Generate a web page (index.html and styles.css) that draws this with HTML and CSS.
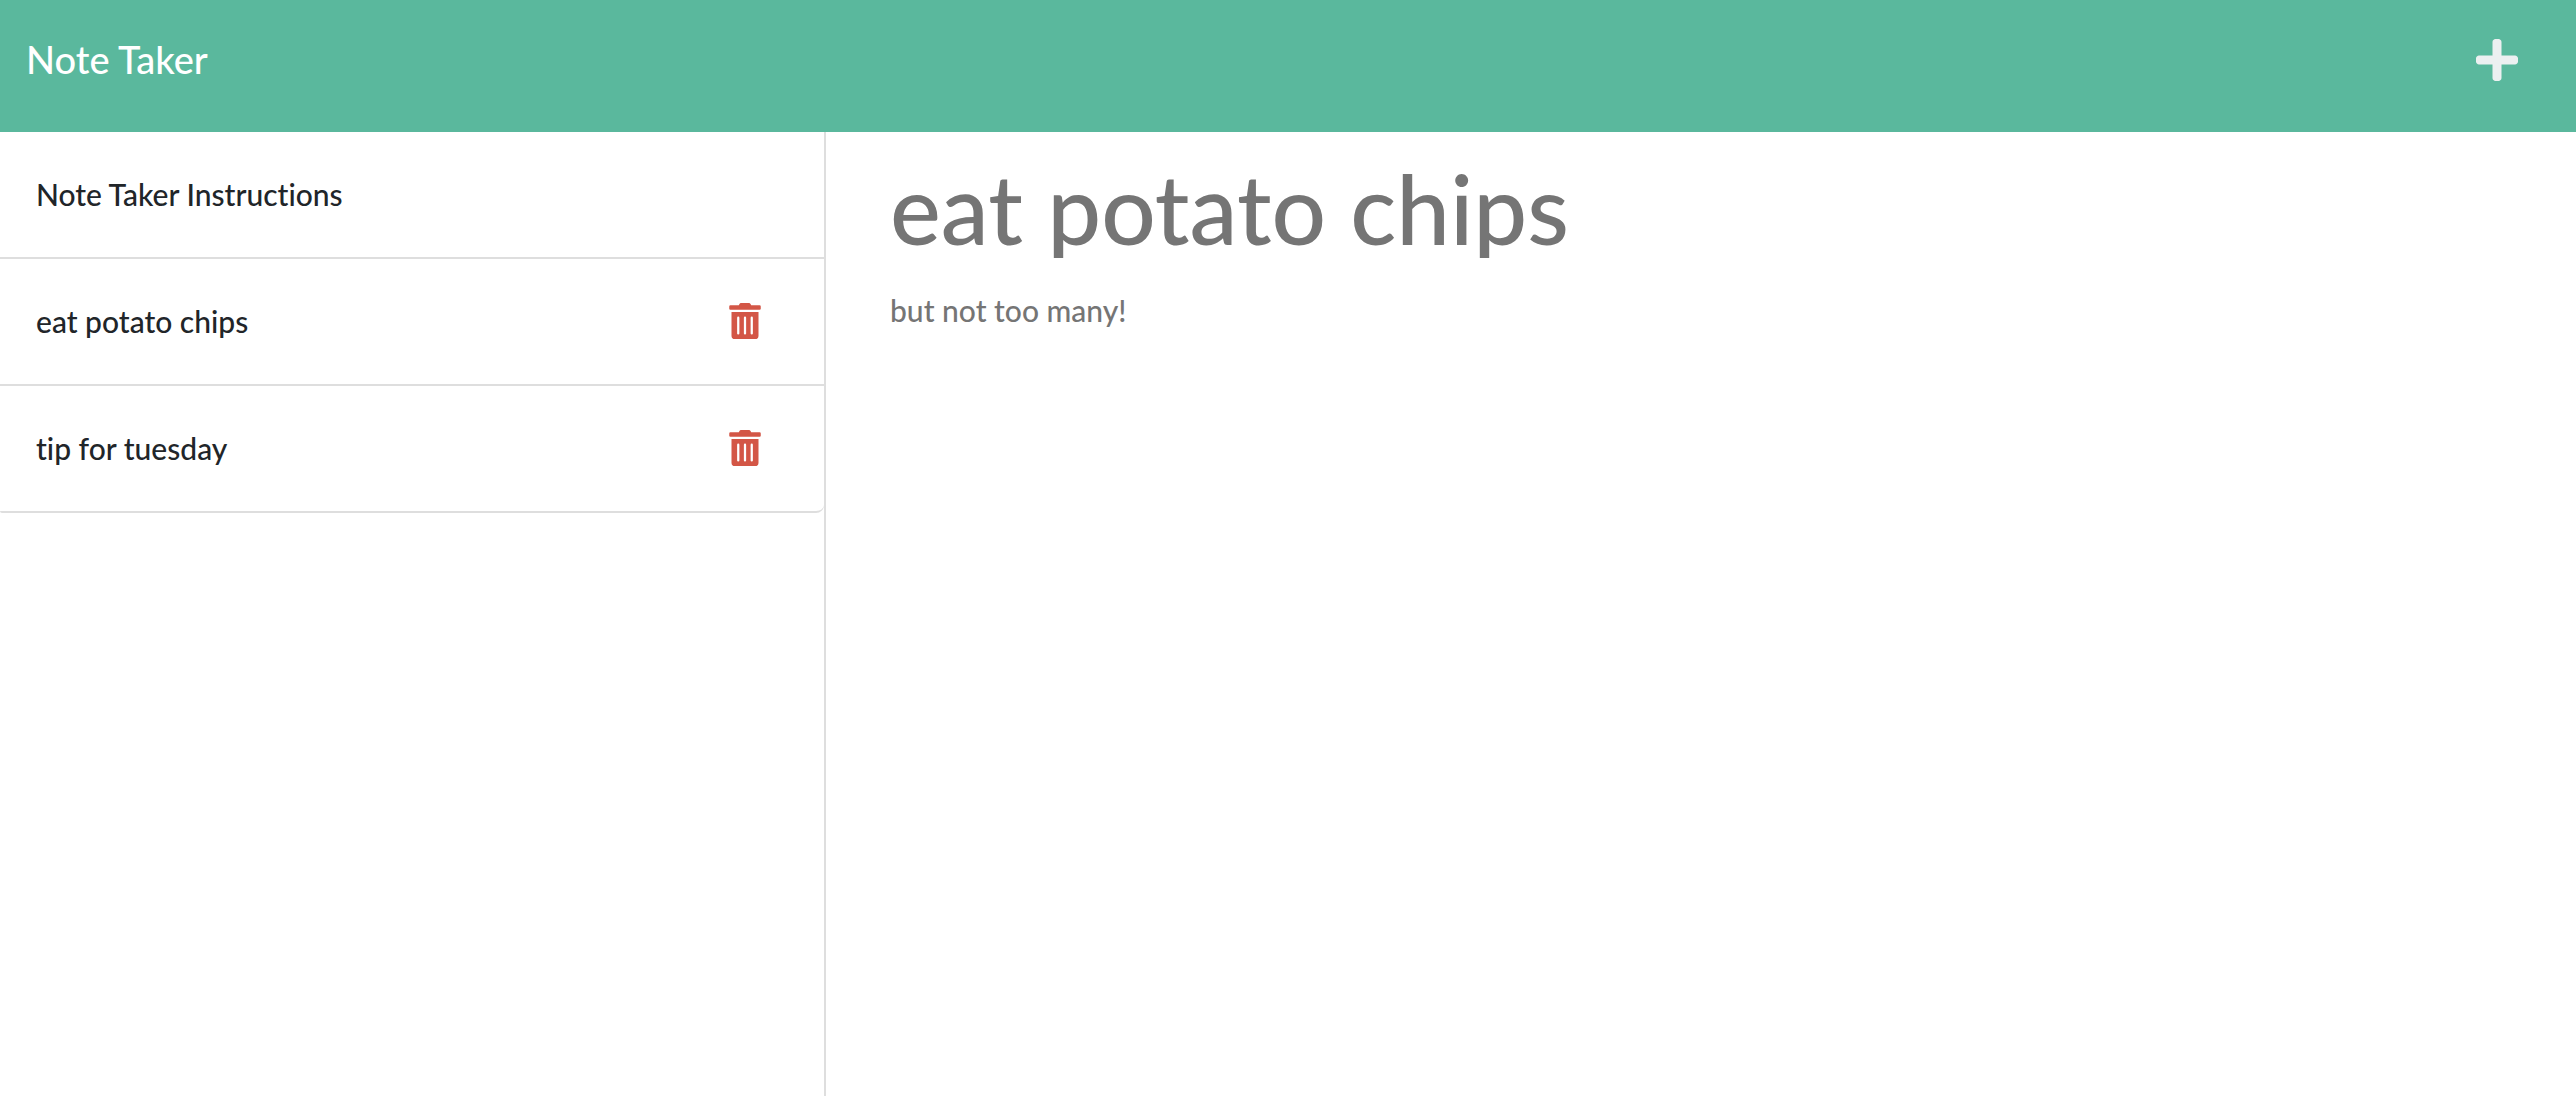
FILE: index.html
```html
<!DOCTYPE html>
<html lang="en">
<head>
<meta charset="utf-8">
<meta name="viewport" content="width=device-width, initial-scale=1">
<title>Note Taker</title>
<link rel="stylesheet" href="styles.css">
</head>
<body>
<svg class="sprite" aria-hidden="true">
  <symbol id="trash" viewBox="0 0 448 512"><path d="M32 464a48 48 0 0 0 48 48h288a48 48 0 0 0 48-48V128H32zm272-256a16 16 0 0 1 32 0v224a16 16 0 0 1-32 0zm-96 0a16 16 0 0 1 32 0v224a16 16 0 0 1-32 0zm-96 0a16 16 0 0 1 32 0v224a16 16 0 0 1-32 0zM432 32H312l-9.4-18.7A24 24 0 0 0 281.1 0H166.8a23.72 23.72 0 0 0-21.4 13.3L136 32H16A16 16 0 0 0 0 48v32a16 16 0 0 0 16 16h416a16 16 0 0 0 16-16V48a16 16 0 0 0-16-16z"/></symbol>
</svg>
<header class="navbar">
  <a class="brand" href="/">Note Taker</a>
  <button class="icon-button new-note" type="button" aria-label="New note">
    <svg class="plus-icon" viewBox="0 0 448 512" aria-hidden="true"><path d="M416 208H272V64c0-17.67-14.33-32-32-32h-32c-17.67 0-32 14.33-32 32v144H32c-17.67 0-32 14.33-32 32v32c0 17.67 14.33 32 32 32h144v144c0 17.67 14.33 32 32 32h32c17.67 0 32-14.33 32-32V304h144c17.67 0 32-14.33 32-32v-32c0-17.67-14.33-32-32-32z"/></svg>
  </button>
</header>
<div class="layout">
  <nav class="sidebar" aria-label="Notes">
    <ul class="note-list">
      <li class="note-item"><a class="note-link" href="#instructions">Note Taker Instructions</a></li>
      <li class="note-item">
        <a class="note-link" href="#chips">eat potato chips</a>
        <button class="icon-button delete-note" type="button" aria-label="Delete eat potato chips"><svg class="trash-icon" aria-hidden="true"><use href="#trash"/></svg></button>
      </li>
      <li class="note-item">
        <a class="note-link" href="#tuesday">tip for tuesday</a>
        <button class="icon-button delete-note" type="button" aria-label="Delete tip for tuesday"><svg class="trash-icon" aria-hidden="true"><use href="#trash"/></svg></button>
      </li>
    </ul>
  </nav>
  <main class="editor">
    <input class="note-title" type="text" placeholder="eat potato chips" aria-label="Note title">
    <textarea class="note-text" placeholder="but not too many!" aria-label="Note text"></textarea>
  </main>
</div>
</body>
</html>
```
FILE: styles.css
```css
* {
  box-sizing: border-box;
}

body {
  display: flex;
  flex-direction: column;
  min-height: 100vh;
  margin: 0;
  background: #fff;
  color: #212529;
  font: 500 30px/45px Lato, "Liberation Sans", sans-serif;
  font-variant-ligatures: none;
}

.sprite {
  display: none;
}

.navbar {
  display: flex;
  align-items: flex-start;
  justify-content: space-between;
  min-height: 132px;
  padding: 32px 58px 32px 26px;
  background: #5ab89d;
}

.brand {
  color: #fff;
  font-size: 38px;
  line-height: 54px;
  text-decoration: none;
}

.icon-button {
  display: flex;
  padding: 0;
  border: 0;
  background: none;
  cursor: pointer;
}

.new-note {
  padding: 4px 0;
}

.plus-icon {
  width: 42px;
  height: 48px;
  fill: #ecf0f1;
}

.layout {
  display: grid;
  flex: 1;
  grid-template-columns: 1fr 2fr;
  padding-right: 98px;
}

.sidebar {
  border-right: 2px solid #dedede;
}

.note-list {
  margin: 0;
  padding: 0;
  list-style: none;
}

.note-item {
  display: flex;
  align-items: center;
  justify-content: space-between;
  min-height: 127px;
  padding: 40px 63px 40px 36px;
  border-bottom: 2px solid #dedede;
}

.note-item:last-child {
  border-radius: 0 0 8px 2px;
}

.note-link {
  color: inherit;
  text-decoration: none;
}

.delete-note {
  padding-bottom: 2px;
}

.trash-icon {
  width: 32px;
  height: 36px;
  fill: #d35646;
}

.editor {
  display: flex;
  flex-direction: column;
  gap: 30px;
  padding: 26px 0 0 64px;
}

.note-title,
.note-text {
  width: 100%;
  padding: 0;
  border: 0;
  outline: 0;
  background: none;
  color: #757575;
  font: inherit;
}

.note-title {
  height: 100px;
  font-size: 96px;
  line-height: 100px;
  overflow: clip;
}

.note-text {
  flex: 1;
  resize: none;
}

.note-title::placeholder,
.note-text::placeholder {
  color: #757575;
}
```
